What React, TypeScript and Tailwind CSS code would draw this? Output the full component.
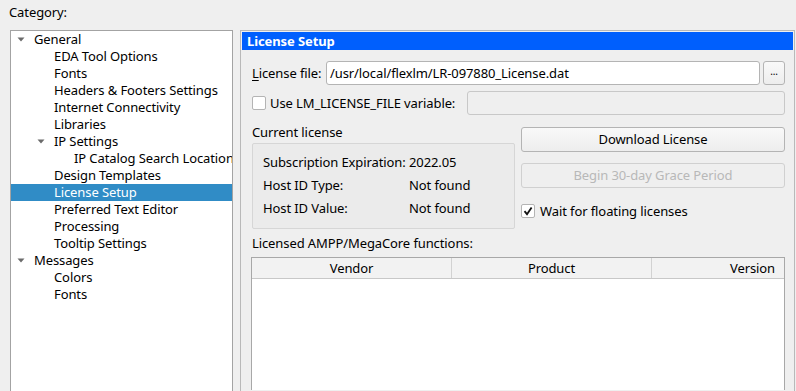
import React from "react";

type TreeItem = {
  label: string;
  level: number;
  expanded?: boolean;
  selected?: boolean;
};

const treeItems: TreeItem[] = [
  { label: "General", level: 0, expanded: true },
  { label: "EDA Tool Options", level: 1 },
  { label: "Fonts", level: 1 },
  { label: "Headers & Footers Settings", level: 1 },
  { label: "Internet Connectivity", level: 1 },
  { label: "Libraries", level: 1 },
  { label: "IP Settings", level: 1, expanded: true },
  { label: "IP Catalog Search Locations", level: 2 },
  { label: "Design Templates", level: 1 },
  { label: "License Setup", level: 1, selected: true },
  { label: "Preferred Text Editor", level: 1 },
  { label: "Processing", level: 1 },
  { label: "Tooltip Settings", level: 1 },
  { label: "Messages", level: 0, expanded: true },
  { label: "Colors", level: 1 },
  { label: "Fonts", level: 1 },
];

const indentClass = ["pl-[23px]", "pl-[43px]", "pl-[63px]"];
const arrowClass = ["left-[6px]", "left-[26px]", "left-[46px]"];

const Arrow = () => (
  <svg width="8" height="5" viewBox="0 0 8 5" className="block">
    <path d="M0.5 0.5 L7.5 0.5 L4 4.5 Z" fill="#6b6b6b" />
  </svg>
);

const TreeRow = ({ item }: { item: TreeItem }) => (
  <div
    className={`relative flex h-[17px] items-center whitespace-nowrap ${
      indentClass[item.level]
    } ${item.selected ? "bg-[#308cc6] text-white" : "text-black"}`}
  >
    {item.expanded ? (
      <span className={`absolute top-[6px] ${arrowClass[item.level]}`}>
        <Arrow />
      </span>
    ) : null}
    {item.label}
  </div>
);

const CheckBox = ({ checked }: { checked?: boolean }) => (
  <span className="flex h-[14px] w-[14px] shrink-0 items-center justify-center rounded-[2px] border border-[#b4b4b4] bg-white">
    {checked ? (
      <svg width="10" height="10" viewBox="0 0 10 10">
        <path
          d="M1.5 5.2 L4 8.2 L8.6 1.4"
          fill="none"
          stroke="#111"
          strokeWidth="1.8"
        />
      </svg>
    ) : null}
  </span>
);

const Button = ({
  children,
  disabled,
}: {
  children: React.ReactNode;
  disabled?: boolean;
}) => (
  <div
    className={`flex h-[25px] items-center justify-center rounded-[3px] border ${
      disabled
        ? "border-[#d0d0d0] bg-[#efefef] text-[#b8b8b8]"
        : "border-[#b4b4b4] bg-gradient-to-b from-[#f9f9f9] to-[#ededed] text-black"
    }`}
  >
    {children}
  </div>
);

const InfoRow = ({ label, value }: { label: string; value: string }) => (
  <div className="flex h-[23px] items-center whitespace-nowrap">
    <span className="w-[146px] shrink-0">{label}</span>
    <span>{value}</span>
  </div>
);

export default function App() {
  return (
    <div
      className="flex h-[391px] w-[796px] flex-col overflow-hidden bg-[#efefef] text-[13px] leading-[17px] tracking-[-0.1px] text-black"
      style={{ fontFamily: '"Noto Sans", "Open Sans", sans-serif' }}
    >
      <div className="h-[30px] pl-[9px] pt-[4px]">Category:</div>
      <div className="flex min-h-0 flex-1">
        {/* category tree */}
        <div className="ml-[10px] w-[223px] shrink-0 overflow-hidden border border-b-0 border-[#a3a3a3] bg-white">
          {treeItems.map((item, i) => (
            <TreeRow key={i} item={item} />
          ))}
        </div>

        {/* settings page */}
        <div className="ml-[7px] flex w-[555px] shrink-0 flex-col border border-b-0 border-[#b9b9b9] p-px">
          <div className="flex h-[18px] items-center bg-[#005ffd] pl-[5px] font-bold text-white">
            License Setup
          </div>

          <div className="flex flex-col pl-[10px] pr-[8px]">
            <div className="mt-[11px] flex h-[24px] items-center">
              <span className="w-[74px] shrink-0">
                <span className="underline underline-offset-2">L</span>icense
                file:
              </span>
              <div className="flex h-[24px] w-[434px] shrink-0 items-center rounded-[3px] border border-[#b4b4b4] bg-white pl-[3px]">
                /usr/local/flexlm/LR-097880_License.dat
              </div>
              <div className="ml-[3px] flex h-[24px] w-[22px] shrink-0 items-center justify-center rounded-[3px] border border-[#b4b4b4] bg-gradient-to-b from-[#f9f9f9] to-[#ededed] pb-[4px] text-[10px]">
                ...
              </div>
            </div>

            <div className="mt-[6px] flex h-[24px] items-center">
              <CheckBox />
              <span className="ml-[4px] w-[197px] shrink-0">
                Use LM_LICENSE_FILE variable:
              </span>
              <div className="h-[24px] flex-1 rounded-[3px] border border-[#c8c8c8] bg-[#efefef]" />
            </div>

            <div className="mt-[6px] flex gap-[6px]">
              <div className="flex w-[263px] shrink-0 flex-col">
                <div className="flex h-[20px] items-center pt-[2px]">Current license</div>
                <div className="mt-[2px] flex h-[86px] flex-col rounded-[2px] border border-[#d6d6d6] bg-[#ebebeb] px-[10px] pt-[7px]">
                  <InfoRow label="Subscription Expiration:" value="2022.05" />
                  <InfoRow label="Host ID Type:" value="Not found" />
                  <InfoRow label="Host ID Value:" value="Not found" />
                </div>
              </div>
              <div className="flex flex-1 flex-col pt-[6px]">
                <Button>Download License</Button>
                <div className="mt-[11px]">
                  <Button disabled>Begin 30-day Grace Period</Button>
                </div>
                <div className="mt-[13px] flex h-[20px] items-center">
                  <CheckBox checked />
                  <span className="ml-[5px]">Wait for floating licenses</span>
                </div>
              </div>
            </div>

            <div className="mt-[3px] flex h-[20px] items-center pt-[2px]">
              Licensed AMPP/MegaCore functions:
            </div>
          </div>

          <div className="ml-[9px] mr-[8px] mt-[5px] flex flex-1 flex-col border border-b-0 border-[#a8a8a8] bg-white">
            <div className="flex h-[21px] border-b border-[#c8c8c8] bg-[#f2f2f2]">
              <div className="flex w-[200px] items-center justify-center border-r border-[#d2d2d2]">
                Vendor
              </div>
              <div className="flex w-[200px] items-center justify-center border-r border-[#d2d2d2]">
                Product
              </div>
              <div className="flex flex-1 items-center justify-end pr-[9px]">
                Version
              </div>
            </div>
          </div>
        </div>
      </div>
    </div>
  );
}
